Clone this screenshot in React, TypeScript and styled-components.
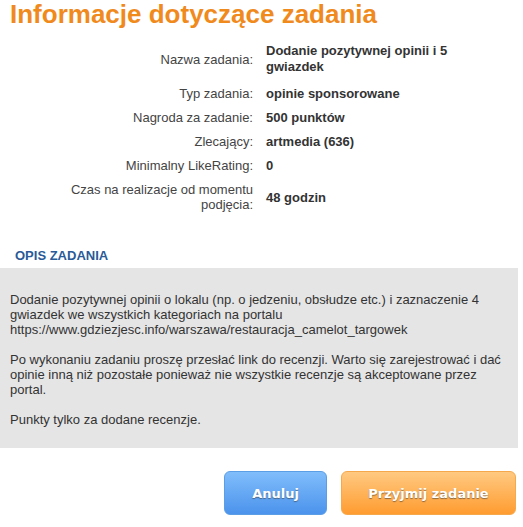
import React from "react";
import styled, { createGlobalStyle } from "styled-components";

const Global = createGlobalStyle`
  html, body { margin: 0; padding: 0; background: #fff; }
  body { font-family: "Liberation Sans", Arial, sans-serif; color: #333; }
`;

const Page = styled.div`
  width: 518px;
  display: flex;
  flex-direction: column;
`;

const Title = styled.h1`
  margin: 0;
  padding: 0 0 0 10px;
  height: 31px;
  font-family: "Liberation Sans", Arial, sans-serif;
  font-weight: bold;
  font-size: 26px;
  line-height: 29px;
  color: #f08a1c;
`;

const InfoGrid = styled.div`
  display: grid;
  grid-template-columns: 194px 190px;
  column-gap: 13px;
  row-gap: 9px;
  padding: 12px 0 0 59px;
  align-items: center;
  font-size: 13px;
  line-height: 15px;
`;

const Label = styled.div<{ $first?: boolean }>`
  text-align: right;
  color: #444;
  margin-bottom: ${(p) => (p.$first ? "2px" : "0")};
`;

const Value = styled.div<{ $first?: boolean }>`
  font-weight: bold;
  color: #333;
  line-height: ${(p) => (p.$first ? "16px" : "15px")};
  margin-bottom: ${(p) => (p.$first ? "2px" : "0")};
`;

const SectionTitle = styled.h2`
  margin: 0;
  padding: 36px 0 4px 15px;
  font-size: 13px;
  line-height: 16px;
  font-weight: bold;
  color: #2a5b98;
  text-transform: uppercase;
`;

const DescBox = styled.div`
  background: #e5e5e5;
  padding: 24px 10px 21px 10px;
  font-size: 13px;
  line-height: 15px;
  color: #333;
`;

const Para = styled.p`
  margin: 0 0 15px 0;
  &:last-child { margin-bottom: 0; }
`;

const Actions = styled.div`
  display: flex;
  justify-content: flex-end;
  gap: 14px;
  padding: 23px 2px 0 0;
`;

const Button = styled.button<{ $tone: "blue" | "orange"; $w: number }>`
  width: ${(p) => p.$w}px;
  height: 44px;
  border-radius: 6px;
  border: 1px solid ${(p) => (p.$tone === "blue" ? "#5b9ee6" : "#f6a94c")};
  background: ${(p) =>
    p.$tone === "blue"
      ? "linear-gradient(#80bdfb, #4b93ec)"
      : "linear-gradient(#ffc981, #ff9c30)"};
  color: #fff;
  font-family: "DejaVu Sans", Verdana, sans-serif;
  font-weight: bold;
  font-size: 13px;
  text-shadow: 0 1px 1px rgba(60, 60, 60, 0.6);
  cursor: pointer;
  padding: 0;
`;

const rows: [string, string][] = [
  ["Nazwa zadania:", "Dodanie pozytywnej opinii i 5 gwiazdek"],
  ["Typ zadania:", "opinie sponsorowane"],
  ["Nagroda za zadanie:", "500 punktów"],
  ["Zlecający:", "artmedia (636)"],
  ["Minimalny LikeRating:", "0"],
  ["Czas na realizacje od momentu podjęcia:", "48 godzin"],
];

export default function App() {
  return (
    <Page>
      <Global />
      <Title>Informacje dotyczące zadania</Title>
      <InfoGrid>
        {rows.map(([l, v], i) => (
          <React.Fragment key={l}>
            <Label $first={i === 0}>{l}</Label>
            <Value $first={i === 0}>{v}</Value>
          </React.Fragment>
        ))}
      </InfoGrid>
      <SectionTitle>Opis zadania</SectionTitle>
      <DescBox>
        <Para>
          Dodanie pozytywnej opinii o lokalu (np. o jedzeniu, obsłudze etc.) i zaznaczenie 4 gwiazdek we wszystkich kategoriach na portalu https://www.gdziezjesc.info/warszawa/restauracja_camelot_targowek
        </Para>
        <Para>
          Po wykonaniu zadaniu proszę przesłać link do recenzji. Warto się zarejestrować i dać opinie inną niż pozostałe ponieważ nie wszystkie recenzje są akceptowane przez portal.
        </Para>
        <Para>Punkty tylko za dodane recenzje.</Para>
      </DescBox>
      <Actions>
        <Button $tone="blue" $w={103}>Anuluj</Button>
        <Button $tone="orange" $w={175}>Przyjmij zadanie</Button>
      </Actions>
    </Page>
  );
}
